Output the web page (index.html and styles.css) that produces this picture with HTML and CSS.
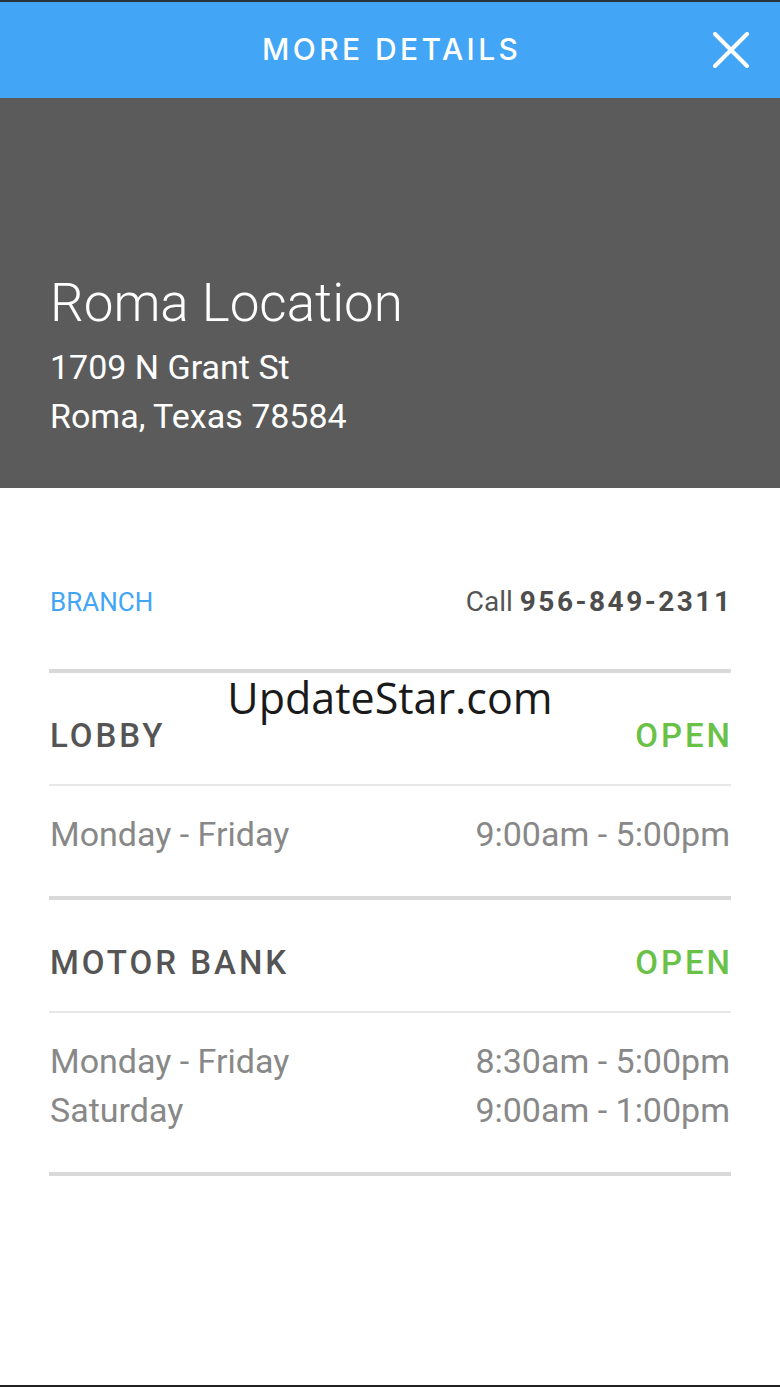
FILE: index.html
```html
<!DOCTYPE html>
<html lang="en">
<head>
    <meta charset="UTF-8">
    <meta name="viewport" content="width=device-width, initial-scale=1.0">
    <title>More Details</title>
    <link rel="stylesheet" href="styles.css">
</head>
<body>
    <div class="screen">
        <header class="top-bar">
            <span></span>
            <h1 class="top-title">MORE DETAILS</h1>
            <button class="close-btn" aria-label="Close">
                <svg width="36" height="36" viewBox="0 0 36 36">
                    <path d="M2 2 L34 34 M34 2 L2 34" stroke="#fff" stroke-width="4" stroke-linecap="round" fill="none"/>
                </svg>
            </button>
        </header>

        <section class="hero">
            <h2 class="hero-name">Roma Location</h2>
            <div class="hero-address">
                1709 N Grant St<br>
                Roma, Texas 78584
            </div>
        </section>

        <div class="details">
            <div class="branch-row">
                <span class="branch-label">BRANCH</span>
                <span class="call">Call <b>956-849-2311</b></span>
            </div>

            <div class="hours-block">
                <div class="hours-head">
                    <span class="hours-name">LOBBY</span>
                    <span class="status">OPEN</span>
                </div>
                <div class="hours-list">
                    <div class="hours-line"><span>Monday - Friday</span><span>9:00am - 5:00pm</span></div>
                </div>
            </div>

            <div class="hours-block">
                <div class="hours-head">
                    <span class="hours-name">MOTOR BANK</span>
                    <span class="status">OPEN</span>
                </div>
                <div class="hours-list">
                    <div class="hours-line"><span>Monday - Friday</span><span>8:30am - 5:00pm</span></div>
                    <div class="hours-line"><span>Saturday</span><span>9:00am - 1:00pm</span></div>
                </div>
            </div>
            <div class="end-rule"></div>
        </div>

        <div class="watermark">UpdateStar.com</div>
    </div>
</body>
</html>
```

FILE: styles.css
```css
* {
    box-sizing: border-box;
}

body {
    margin: 0;
    font-family: Roboto, "Liberation Sans", sans-serif;
    background: #fff;
}

.screen {
    position: relative;
    min-height: 100vh;
    border-top: 2px solid #2a323c;
    border-bottom: 2px solid #222;
}

/* header bar */
.top-bar {
    height: 96px;
    background: #42a5f5;
    display: grid;
    grid-template-columns: 1fr auto 1fr;
    align-items: center;
}

.top-title {
    margin: 0;
    font-family: Inter, "Liberation Sans", sans-serif;
    font-weight: 500;
    font-size: 30px;
    letter-spacing: 3.4px;
    padding-left: 3.4px;
    color: #fff;
    padding-bottom: 2px;
}

.close-btn {
    justify-self: end;
    margin-right: 31px;
    padding: 0;
    border: none;
    background: none;
    display: flex;
    cursor: pointer;
}

/* grey location band */
.hero {
    background: #5b5b5b;
    color: #fff;
    padding: 175px 50px 47px;
}

.hero-name {
    margin: 0;
    font-weight: 300;
    font-size: 53px;
    line-height: 60px;
}

.hero-address {
    margin-top: 10px;
    font-size: 34px;
    line-height: 49px;
}

/* details */
.details {
    padding: 0 49px;
}

.branch-row {
    display: flex;
    justify-content: space-between;
    align-items: baseline;
    padding: 94px 1px 47px;
    line-height: 40px;
    white-space: nowrap;
}

.branch-label {
    font-size: 26px;
    color: #42a5f5;
}

.call {
    font-size: 28px;
    color: #555;
}

.call b {
    letter-spacing: 2.5px;
    margin-right: -2.5px;
    color: #4d4d4d;
}

.hours-block {
    border-top: 4px solid #d9d9d9;
}

.hours-head {
    display: flex;
    justify-content: space-between;
    padding: 43px 1px 28px;
    line-height: 40px;
    font-size: 33px;
    font-weight: 500;
    letter-spacing: 3px;
    border-bottom: 2px solid #e8e8e8;
}

.hours-name {
    color: #555;
}

.status {
    color: #6ac147;
    margin-right: -3px;
}

.hours-list {
    padding: 24px 1px 37px;
}

.hours-line {
    display: flex;
    justify-content: space-between;
    font-size: 34px;
    line-height: 49px;
    color: #888;
}

.end-rule {
    border-top: 4px solid #d9d9d9;
}

/* watermark overlay */
.watermark {
    position: absolute;
    top: 666px;
    left: 0;
    right: 0;
    text-align: center;
    font-family: "Open Sans", "Noto Sans", sans-serif;
    font-size: 43px;
    color: #1a1a1a;
}
```
